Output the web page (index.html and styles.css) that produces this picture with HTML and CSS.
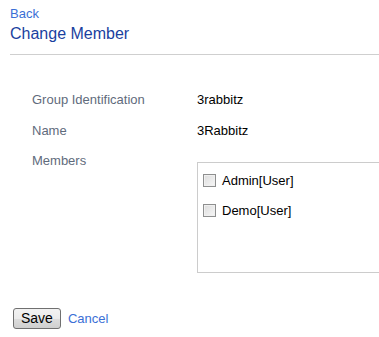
FILE: index.html
```html
<!DOCTYPE html>
<html lang="en">
<head>
    <meta charset="UTF-8">
    <meta name="viewport" content="width=device-width, initial-scale=1.0">
    <title>Change Member</title>
    <link rel="stylesheet" href="styles.css">
</head>
<body>

<div class="page">
    <a href="#" class="back">Back</a>
    <h1 class="title">Change Member</h1>
    <hr class="divider">

    <form class="form">
        <div class="rows">
            <div class="row">
                <div class="label">Group Identification</div>
                <div class="value">3rabbitz</div>
            </div>
            <div class="row">
                <div class="label">Name</div>
                <div class="value">3Rabbitz</div>
            </div>
            <div class="row">
                <div class="label">Members</div>
                <div class="value">
                    <div class="members">
                        <label class="member"><input type="checkbox" class="check"> Admin[User]</label>
                        <label class="member"><input type="checkbox" class="check"> Demo[User]</label>
                    </div>
                </div>
            </div>
        </div>

        <div class="actions">
            <button type="button" class="save">Save</button>
            <a href="#" class="cancel">Cancel</a>
        </div>
    </form>
</div>

</body>
</html>
```

FILE: styles.css
```css
html {
    overflow: hidden;
}

body {
    font-family: "Liberation Sans", Arial, sans-serif;
    font-size: 13px;
    line-height: 15px;
    margin: 0;
    background-color: #fff;
    color: #000;
}

.page {
    padding: 6px 0 0 10px;
    overflow: hidden;
}

.back {
    display: block;
    color: #3b6fd6;
    text-decoration: none;
    line-height: 15px;
}

.title {
    margin: 3px 0 0 0;
    font-size: 16px;
    font-weight: normal;
    line-height: 19px;
    color: #1a3fa0;
}

.divider {
    margin: 11px 0 0 0;
    border: none;
    border-top: 1px solid #cfcfcf;
    height: 0;
}

.rows {
    display: flex;
    flex-direction: column;
    gap: 15.5px;
    padding: 37px 0 0 22px;
}

.row {
    display: flex;
}

.label {
    width: 165px;
    flex-shrink: 0;
    color: #5f6b7c;
}

.value {
    flex: 1;
    min-width: 0;
}

.members {
    margin-top: 9px;
    margin-right: -1px;
    height: 111px;
    border: 1px solid #cccccc;
    padding: 9px 0 0 5px;
    box-sizing: border-box;
}

.member {
    display: flex;
    align-items: center;
    gap: 6px;
    height: 17px;
    margin-bottom: 13px;
}

.check {
    appearance: none;
    margin: 0;
    width: 13px;
    height: 13px;
    border: 1px solid #8e8f8f;
    background: linear-gradient(135deg, #dcdcdc, #f7f7f7);
    box-shadow: inset 0 0 0 1px #f0f0f0;
    box-sizing: border-box;
}

.actions {
    display: flex;
    align-items: center;
    padding: 35px 0 0 3px;
}

.save {
    font-family: "Liberation Sans", Arial, sans-serif;
    font-size: 14px;
    line-height: 17px;
    height: 21px;
    padding: 1px 7px;
    border: 1px solid #707070;
    border-radius: 3px;
    background: linear-gradient(#f2f2f2, #ebebeb 50%, #dddddd 51%, #cfcfcf);
    color: #000;
}

.cancel {
    margin-left: 7px;
    color: #3b6fd6;
    text-decoration: none;
}
```
